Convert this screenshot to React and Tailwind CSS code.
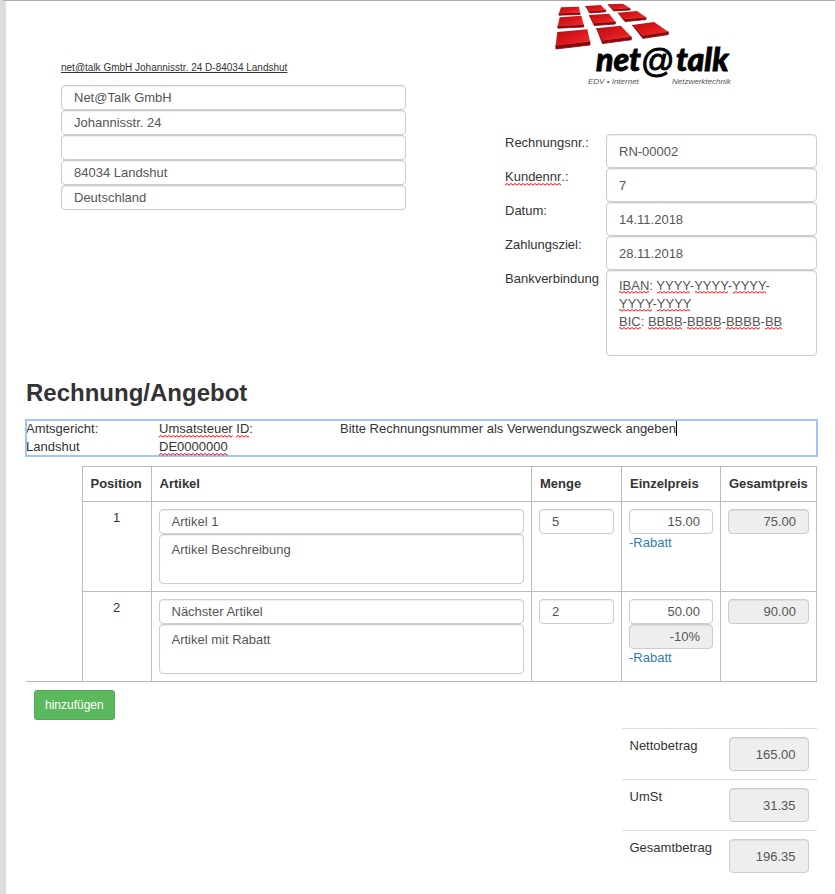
import { useId } from "react";

const field =
  "block w-full min-w-0 rounded border border-[#ccc] px-3 leading-[18px] text-[#555] outline-none shadow-[inset_0_1px_1px_rgba(0,0,0,0.075)]";
const small = `${field} h-[25px] bg-white`;
const smallLocked = `${field} h-[25px] bg-[#eee] text-right`;
const tall = `${field} h-[34px] bg-white`;
const tallLocked = `${field} h-[34px] bg-[#eee] text-right`;
const area = `${field} resize-none overflow-hidden bg-white py-1.5`;
const head = "border border-[#bbb] p-2 align-top";
const cell = "border border-[#bbb] p-[7px] align-top";

function WavePattern({ id }) {
  return (
    <defs>
      <pattern id={id} width="4" height="3" patternUnits="userSpaceOnUse">
        <path d="M-1 3 L2 .5 L5 3" fill="none" stroke="#f00" strokeWidth="1" />
      </pattern>
    </defs>
  );
}

function Misspelled({ children }) {
  const id = useId();
  return (
    <span className="relative inline-block">
      {children}
      <svg className="absolute bottom-0 left-0 w-full" height="3" aria-hidden="true">
        <WavePattern id={id} />
        <rect width="100%" height="3" fill={`url(#${id})`} />
      </svg>
    </span>
  );
}

const bankMarks = [
  { x: 13, y: 21, w: 30 },
  { x: 51, y: 21, w: 33 },
  { x: 89, y: 21, w: 33 },
  { x: 127, y: 21, w: 33 },
  { x: 13, y: 39, w: 33 },
  { x: 51, y: 39, w: 33 },
  { x: 13, y: 57, w: 22 },
  { x: 42, y: 57, w: 34 },
  { x: 81, y: 57, w: 34 },
  { x: 120, y: 57, w: 34 },
  { x: 159, y: 57, w: 17 },
];

function BankMarks() {
  return (
    <svg className="pointer-events-none absolute inset-0 size-full" aria-hidden="true">
      <WavePattern id="bank-wave" />
      {bankMarks.map((m) => (
        <rect key={`${m.x}-${m.y}`} x={m.x} y={m.y} width={m.w} height="3" fill="url(#bank-wave)" />
      ))}
    </svg>
  );
}

const tiles = [
  ["6,4.300 24,3.700 25,9.700 4,10.300", "4,10.300 25,9.700 25,11.500 4,12.200"],
  ["30.700,3 45.700,2 50.700,7 34.700,8.300", "30.700,3 34.700,8.300 50.700,7 50.700,8.800 34.700,10"],
  ["53,1.300 68,.7 75,5.300 58.700,6.300", "53,1.300 58.700,6.300 75,5.300 75,7 58.700,8"],
  ["4.700,14.300 26.300,12.700 28.700,21.700 2.700,23", "2.700,23 28.700,21.700 28.700,24 3,25.200"],
  ["34.300,12 54,10.700 60.300,18.700 39.300,20.300", "34.300,12 39.300,20.300 60.300,18.700 60.300,21 39.300,22.600"],
  ["63,9.700 82,8 91,14.300 70,16.300", "63,9.700 70,16.300 91,14.300 91,16.600 70,18.600"],
  ["2.300,29 32.300,26.300 35,38.500 .7,42.500", "0.700,42.500 35,38.500 35,42 1,46"],
  ["41.700,25.300 65.700,22.700 76.300,33.700 47.300,37.500", "41.700,25.300 47.300,37.500 76.300,33.700 76.300,36.800 47.500,40.600"],
  ["77.300,22 99,19 113.300,28.800 87.700,32.500", "77.300,22 87.700,32.500 113.300,28.800 113.300,31.600 87.900,35.400"],
];

function Logo() {
  return (
    <svg className="block h-[84px] w-[182px]" viewBox="0 0 182 84" role="img" aria-label="net@talk">
      <defs>
        <linearGradient id="tile" x1="0" y1="0" x2="1" y2="1">
          <stop offset="0" stopColor="#b01015" />
          <stop offset=".5" stopColor="#dc171b" />
          <stop offset="1" stopColor="#f23030" />
        </linearGradient>
      </defs>
      {tiles.map(([top, edge]) => (
        <g key={top}>
          <polygon points={edge} fill="#86090c" stroke="#86090c" strokeWidth=".8" />
          <polygon points={top} fill="url(#tile)" />
        </g>
      ))}
      <g
        fontFamily="Lato, 'Liberation Sans', Arial, sans-serif"
        fontWeight="900"
        fontStyle="italic"
        fontSize="32"
        stroke="#000"
        strokeWidth=".8"
      >
        <text x="41" y="68">net</text>
        <text x="121" y="68">talk</text>
      </g>
      <text x="86" y="69" fontFamily="'Liberation Sans', Arial, sans-serif" fontSize="33" stroke="#000" strokeWidth="1">
        @
      </text>
      <g fontFamily="'Liberation Sans', Arial, sans-serif" fontStyle="italic" fontSize="8" fill="#555">
        <text x="33" y="81">EDV • Internet</text>
        <text x="117" y="81">Netzwerktechnik</text>
      </g>
    </svg>
  );
}

const address = [
  ["Firma", "Net@Talk GmbH"],
  ["Straße", "Johannisstr. 24"],
  ["Adresszusatz", ""],
  ["Ort", "84034 Landshut"],
  ["Land", "Deutschland"],
];

const details = [
  ["nr", "Rechnungsnr.:", "RN-00002"],
  ["kunde", <><Misspelled>Kundennr</Misspelled>.:</>, "7"],
  ["datum", "Datum:", "14.11.2018"],
  ["ziel", "Zahlungsziel:", "28.11.2018"],
];

const items = [
  { name: "Artikel 1", text: "Artikel Beschreibung", qty: "5", price: "15.00", total: "75.00" },
  { name: "Nächster Artikel", text: "Artikel mit Rabatt", qty: "2", price: "50.00", discount: "-10%", total: "90.00" },
];

const totals = [
  ["netto", "Nettobetrag", "165.00"],
  ["umst", "UmSt", "31.35"],
  ["gesamt", "Gesamtbetrag", "196.35"],
];

export default function App() {
  return (
    <main className="min-h-screen border-t border-l-6 border-t-[#aaa] border-l-[#ddd] bg-white pr-[18px] pb-5 pl-5 font-['Liberation_Sans',Arial,sans-serif] text-[13px] leading-[18px] text-[#333]">
      <header className="grid grid-cols-[35fr_345fr_99fr_312fr]">
        <section className="col-start-2 min-w-0 pt-[58px]">
          <p className="mb-2 text-[10px] whitespace-nowrap underline">
            net@talk GmbH Johannisstr. 24 D-84034 Landshut
          </p>
          {address.map(([label, value]) => (
            <input key={label} aria-label={label} defaultValue={value} className={small} />
          ))}
        </section>
        <section className="col-start-4 min-w-0 pt-0.5">
          <div className="mb-[47px] pl-[50px]">
            <Logo />
          </div>
          <div className="grid grid-cols-[101px_1fr]">
            {details.map(([id, label, value]) => (
              <div key={id} className="contents">
                <label htmlFor={id}>{label}</label>
                <input id={id} defaultValue={value} className={tall} />
              </div>
            ))}
            <label htmlFor="bank">Bankverbindung</label>
            <div className="relative">
              <textarea
                id="bank"
                spellCheck={false}
                className={`${area} h-[86px]`}
                defaultValue={"IBAN: YYYY-YYYY-YYYY-\nYYYY-YYYY\nBIC: BBBB-BBBB-BBBB-BB"}
              />
              <BankMarks />
            </div>
          </div>
        </section>
      </header>

      <h1 className="mt-[21px] mb-[11px] text-2xl leading-8 font-bold">Rechnung/Angebot</h1>

      <div
        role="textbox"
        aria-label="Fußtext"
        aria-multiline="true"
        tabIndex={0}
        className="grid grid-cols-[133fr_181fr_477fr] outline-2 -outline-offset-1 outline-[#a3c4fb]"
      >
        <p>
          Amtsgericht:
          <br />
          Landshut
        </p>
        <p>
          <Misspelled>Umsatsteuer</Misspelled> <Misspelled>ID</Misspelled>:
          <br />
          <Misspelled>DE0000000</Misspelled>
        </p>
        <p>
          Bitte Rechnungsnummer als Verwendungszweck angeben
          <span className="inline-block h-[15px] w-px bg-black align-text-bottom" />
        </p>
      </div>

      <table className="mt-2.5 w-full table-fixed border-collapse">
        <colgroup>
          <col className="w-14" />
          <col className="w-[69px]" />
          <col />
          <col className="w-[90px]" />
          <col className="w-[99px]" />
          <col className="w-24" />
        </colgroup>
        <thead>
          <tr className="h-[35px] text-left">
            <td />
            <th className={head}>Position</th>
            <th className={head}>Artikel</th>
            <th className={head}>Menge</th>
            <th className={head}>Einzelpreis</th>
            <th className={head}>Gesamtpreis</th>
          </tr>
        </thead>
        <tbody>
          {items.map((item, i) => (
            <tr key={item.name} className="h-[90px]">
              <td className={i === items.length - 1 ? "border-b border-[#bbb]" : ""} />
              <td className={`${cell} text-center`}>{i + 1}</td>
              <td className={cell}>
                <input aria-label="Artikel" defaultValue={item.name} className={small} />
                <textarea aria-label="Beschreibung" defaultValue={item.text} className={`${area} h-[50px]`} />
              </td>
              <td className={cell}>
                <input aria-label="Menge" defaultValue={item.qty} className={small} />
              </td>
              <td className={cell}>
                <input aria-label="Einzelpreis" defaultValue={item.price} className={`${small} text-right`} />
                {item.discount && (
                  <input aria-label="Rabatt" readOnly value={item.discount} className={smallLocked} />
                )}
                <a href="#rabatt" className="block text-[#337ab7]">
                  -Rabatt
                </a>
              </td>
              <td className={cell}>
                <input aria-label="Gesamtpreis" readOnly value={item.total} className={smallLocked} />
              </td>
            </tr>
          ))}
          <tr>
            <td colSpan={6} className="p-2">
              <button
                type="button"
                className="block rounded-[3px] border border-[#4cae4c] bg-[#5cb85c] px-2.5 py-[5px] text-xs leading-[18px] text-white"
              >
                hinzufügen
              </button>
            </td>
          </tr>
          {totals.map(([id, label, value]) => (
            <tr key={id} className="h-[51px]">
              <td colSpan={4} />
              <td className="border-t border-[#ddd] p-2 align-top">
                <label htmlFor={id}>{label}</label>
              </td>
              <td className="border-t border-[#ddd] p-2 align-top">
                <input id={id} readOnly value={value} className={tallLocked} />
              </td>
            </tr>
          ))}
        </tbody>
      </table>
    </main>
  );
}
